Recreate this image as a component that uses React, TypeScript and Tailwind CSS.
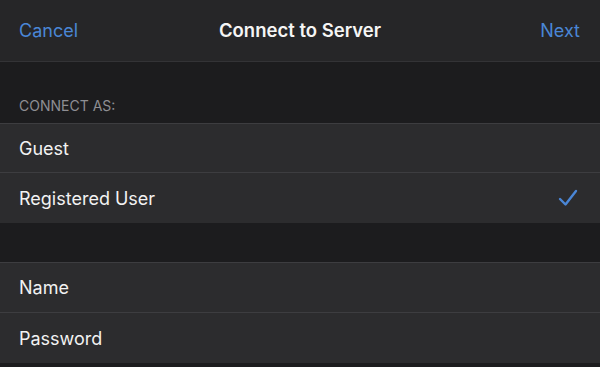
import React from "react";

const font = { fontFamily: "Inter, 'Liberation Sans', sans-serif" };

function Row({ label, checked, last, h = "h-[50px]" }: { label: string; checked?: boolean; last?: boolean; h?: string }) {
  return (
    <div className={`flex ${h} items-center justify-between bg-[#2c2c2e] pl-[19px] pr-[22px] ${last ? "" : "border-b border-[#3d3d40]"}`}>
      <span className="text-[18px] text-[#f2f2f2]">{label}</span>
      {checked && (
        <svg width="20" height="18" viewBox="0 0 20 18" fill="none">
          <path d="M2 10 L7.5 15.5 L18 2" stroke="#4a86d6" strokeWidth="2.4" strokeLinecap="round" strokeLinejoin="round" />
        </svg>
      )}
    </div>
  );
}

export default function App() {
  return (
    <div className="flex h-[367px] w-[600px] flex-col overflow-hidden bg-[#1c1c1e]" style={font}>
      <div className="grid h-[62px] grid-cols-[1fr_auto_1fr] items-center border-b border-[#333336] bg-[#262628] px-[19px]">
        <span className="justify-self-start text-[18px] text-[#4a86d6]">Cancel</span>
        <span className="text-[18.5px] font-semibold text-[#f5f5f5]">Connect to Server</span>
        <span className="justify-self-end pr-[1px] text-[18px] text-[#4a86d6]">Next</span>
      </div>
      <div className="flex h-[62px] items-end border-b border-[#3d3d40] pb-[7px] pl-[19px]">
        <span className="text-[14px] text-[#8e8e93]">CONNECT AS:</span>
      </div>
      <Row label="Guest" h="h-[49px]" />
      <Row label="Registered User" checked last />
      <div className="h-[40px] border-b border-[#3d3d40]" />
      <Row label="Name" />
      <Row label="Password" last />
    </div>
  );
}
